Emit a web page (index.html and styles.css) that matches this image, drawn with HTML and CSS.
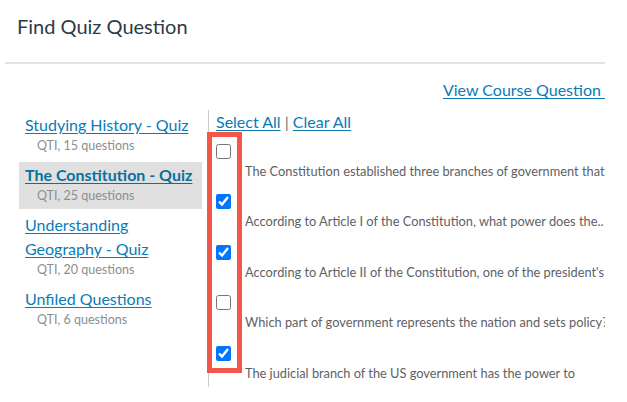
FILE: index.html
```html
<!DOCTYPE html>
<html>
<head>
<meta charset="utf-8">
<link rel="stylesheet" href="styles.css">
</head>
<body>
<div class="page">
  <div class="header">
    <h1 class="title">Find Quiz Question</h1>
  </div>
  <div class="toplinks">
    <a href="#" class="link">View Course Question&nbsp;</a>
  </div>
  <div class="main">
    <ul class="banks">
      <li class="bank">
        <a href="#" class="link bank-name">Studying History - Quiz</a>
        <div class="bank-meta">QTI, 15 questions</div>
      </li>
      <li class="bank selected">
        <a href="#" class="link bank-name">The Constitution - Quiz</a>
        <div class="bank-meta">QTI, 25 questions</div>
      </li>
      <li class="bank">
        <a href="#" class="link bank-name">Understanding Geography - Quiz</a>
        <div class="bank-meta">QTI, 20 questions</div>
      </li>
      <li class="bank">
        <a href="#" class="link bank-name">Unfiled Questions</a>
        <div class="bank-meta">QTI, 6 questions</div>
      </li>
    </ul>
    <div class="questions">
      <div class="select-links">
        <a href="#" class="link">Select All</a> <span class="sep">|</span> <a href="#" class="link">Clear All</a>
      </div>
      <div class="question">
        <input type="checkbox" class="check">
        <div class="qtext">The Constitution established three branches of government that</div>
      </div>
      <div class="question">
        <input type="checkbox" class="check" checked>
        <div class="qtext">According to Article I of the Constitution, what power does the..</div>
      </div>
      <div class="question">
        <input type="checkbox" class="check" checked>
        <div class="qtext">According to Article II of the Constitution, one of the president's</div>
      </div>
      <div class="question">
        <input type="checkbox" class="check">
        <div class="qtext">Which part of government represents the nation and sets policy?</div>
      </div>
      <div class="question">
        <input type="checkbox" class="check" checked>
        <div class="qtext">The judicial branch of the US government has the power to</div>
      </div>
      <div class="highlight"></div>
    </div>
  </div>
</div>
</body>
</html>
```

FILE: styles.css
```css
* { box-sizing: border-box; }

html, body {
  margin: 0;
  padding: 0;
  background: #ffffff;
}

body {
  font-family: Lato, "Noto Sans", sans-serif;
  color: #2d3b45;
  overflow: hidden;
}

.page {
  width: 600px;
  margin-left: 5px;
  overflow: hidden;
}

.header {
  padding: 14px 0 24px 12px;
  border-bottom: 2px solid #e0e4e7;
}

.title {
  margin: 0;
  font-size: 20px;
  line-height: 24px;
  font-weight: 400;
  color: #2d3b45;
}

.link {
  color: #0b7bb6;
  text-decoration: underline;
  text-underline-offset: 2px;
}

.toplinks {
  margin-top: 14px;
  text-align: right;
  font-size: 16px;
  line-height: 24px;
  white-space: nowrap;
}

.main {
  display: flex;
  margin-top: 8px;
}

.banks {
  list-style: none;
  margin: 2px 0 0 14px;
  padding: 0;
  width: 183px;
  flex: none;
  display: flex;
  flex-direction: column;
  gap: 3px;
}

.bank {
  padding: 1px 0 4px 6px;
}

.bank.selected {
  background: #e0e0e0;
}

.bank-name {
  display: block;
  font-size: 16px;
  line-height: 24px;
  width: max-content;
  max-width: 176px;
}

.selected .bank-name {
  font-weight: 700;
  color: #08709f;
}

.bank-meta {
  padding-left: 12px;
  font-size: 12.5px;
  line-height: 18px;
  color: #8a8f93;
}

.questions {
  position: relative;
  margin-left: 6px;
  border-left: 1px solid #c9cdd0;
  padding-left: 7px;
  flex: 1;
  min-width: 0;
  height: 277px;
}

.select-links {
  font-size: 16px;
  line-height: 24px;
}

.sep {
  color: #6b7780;
}

.question {
  height: 50.4px;
  padding-top: 10px;
}

.check {
  display: block;
  width: 15px;
  height: 15px;
  margin: 0;
}

.qtext {
  margin-top: 3px;
  padding-left: 29px;
  font-size: 12.8px;
  line-height: 18px;
  color: #5d6166;
  white-space: nowrap;
  overflow: hidden;
}

.highlight {
  position: absolute;
  left: -2px;
  top: 22px;
  width: 35px;
  height: 241px;
  border: 5px solid #f4574a;
  pointer-events: none;
}
```
